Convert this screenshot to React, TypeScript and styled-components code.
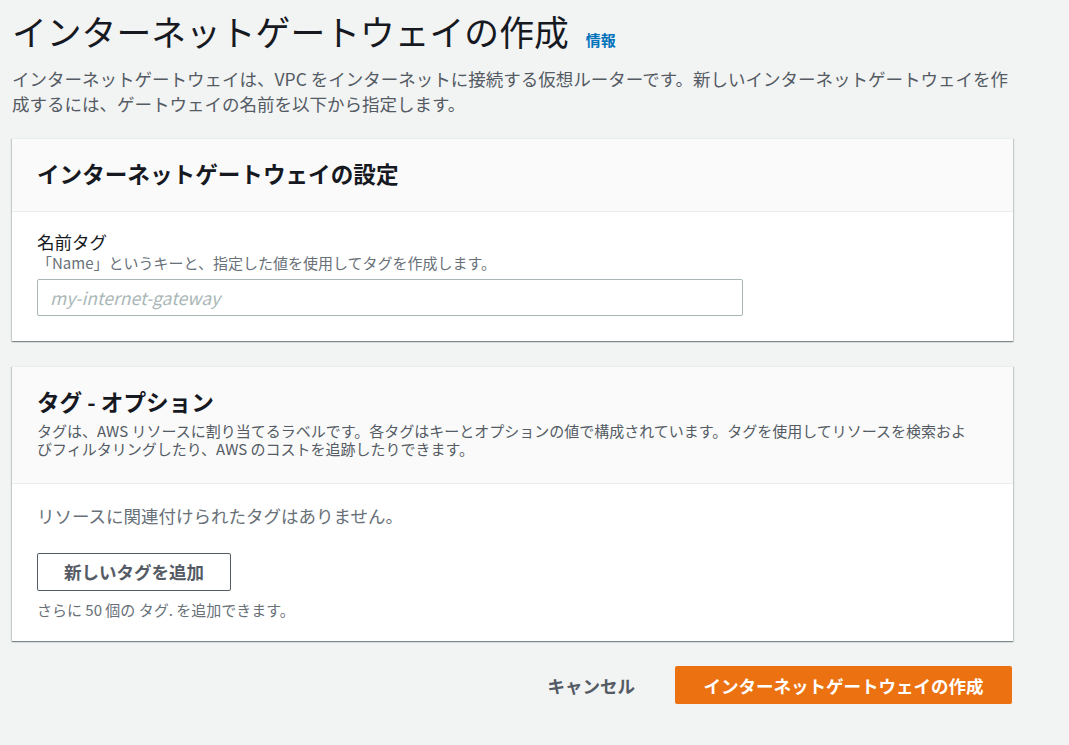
import React from "react";
import styled, { createGlobalStyle } from "styled-components";

const GlobalStyle = createGlobalStyle`
  html, body {
    margin: 0;
    padding: 0;
    background: #f2f3f3;
  }
  body {
    font-family: "Noto Sans CJK JP", "Noto Sans", sans-serif;
    color: #16191f;
    -webkit-font-smoothing: antialiased;
  }
  * { box-sizing: border-box; }
`;

const Page = styled.div`
  width: 1001px;
  margin-left: 12px;
  padding-top: 10px;
  padding-bottom: 40px;
`;

const TitleRow = styled.div`
  display: flex;
  align-items: baseline;
  gap: 17px;
`;

const Title = styled.h1`
  margin: 0;
  font-size: 34.8px;
  line-height: 42px;
  font-weight: 400;
  color: #16191f;
`;

const InfoLink = styled.a`
  font-size: 15px;
  font-weight: 700;
  color: #0073bb;
  text-decoration: none;
  line-height: 20px;
`;

const Lead = styled.p`
  margin: 14px 0 0;
  font-size: 17.5px;
  line-height: 25px;
  color: #545b64;
  max-width: 1001px;
`;

const Card = styled.section`
  margin-top: ${(p: { $top: number }) => p.$top}px;
  background: #ffffff;
  border-top: 1px solid #eaeded;
  box-shadow: 0 1px 1px 0 rgba(0, 28, 36, 0.3),
    1px 1px 1px 0 rgba(0, 28, 36, 0.15), -1px 1px 1px 0 rgba(0, 28, 36, 0.15);
`;

const CardHeader = styled.header<{ $bottom: number }>`
  background: #fafafa;
  border-bottom: 1px solid #eaeded;
  padding: 20px 25px ${(p) => p.$bottom}px;
`;

const CardTitle = styled.h2`
  margin: 0;
  font-size: 22.6px;
  line-height: 30px;
  font-weight: 700;
  color: #16191f;
`;

const CardDesc = styled.p`
  margin: 5px 0 0;
  max-width: 936px;
  font-size: 15px;
  line-height: 18px;
  color: #545b64;
`;

const CardBody = styled.div<{ $top: number; $bottom: number }>`
  padding: ${(p) => p.$top}px 25px ${(p) => p.$bottom}px;
  display: flex;
  flex-direction: column;
  align-items: flex-start;
`;

const Label = styled.label`
  font-size: 17.5px;
  line-height: 25px;
  color: #16191f;
`;

const Hint = styled.div<{ $top?: number }>`
  margin-top: ${(p) => p.$top ?? 0}px;
  font-size: 15px;
  line-height: 18px;
  color: #687078;
`;

const TextInput = styled.input`
  margin-top: 7px;
  width: 706px;
  height: 37px;
  border: 1px solid #aab7b8;
  border-radius: 2px;
  padding: 0 12px;
  font-family: "Noto Sans CJK JP", "Noto Sans", sans-serif;
  font-size: 17.5px;
  color: #16191f;
  background: #fff;
  outline: none;
  &::placeholder {
    color: #aab7b8;
    font-style: italic;
  }
`;

const EmptyText = styled.div`
  font-size: 17.5px;
  line-height: 25px;
  color: #687078;
`;

const OutlineButton = styled.button`
  margin-top: 25px;
  height: 38px;
  padding: 0 26px;
  border: 1px solid #545b64;
  border-radius: 2px;
  background: #fff;
  color: #545b64;
  font-family: "Noto Sans CJK JP", "Noto Sans", sans-serif;
  font-size: 17.5px;
  font-weight: 700;
  line-height: 22px;
  cursor: pointer;
`;

const Footer = styled.div`
  margin-top: 25px;
  display: flex;
  justify-content: flex-end;
  align-items: center;
  gap: 14px;
  padding-right: 1px;
`;

const LinkButton = styled.button`
  height: 38px;
  padding: 0 26px;
  border: none;
  background: transparent;
  color: #545b64;
  font-family: "Noto Sans CJK JP", "Noto Sans", sans-serif;
  font-size: 17.5px;
  font-weight: 700;
  cursor: pointer;
`;

const PrimaryButton = styled.button`
  height: 38px;
  width: 337px;
  border: none;
  border-radius: 2px;
  background: #ec7211;
  color: #ffffff;
  font-family: "Noto Sans CJK JP", "Noto Sans", sans-serif;
  font-size: 17.5px;
  font-weight: 700;
  cursor: pointer;
`;

export default function App() {
  return (
    <>
      <GlobalStyle />
      <Page>
        <TitleRow>
          <Title>インターネットゲートウェイの作成</Title>
          <InfoLink href="#">情報</InfoLink>
        </TitleRow>
        <Lead>
          インターネットゲートウェイは、VPC をインターネットに接続する仮想ルーターです。新しいインターネットゲートウェイを作成するには、ゲートウェイの名前を以下から指定します。
        </Lead>

        <Card $top={22}>
          <CardHeader $bottom={22}>
            <CardTitle>インターネットゲートウェイの設定</CardTitle>
          </CardHeader>
          <CardBody $top={17} $bottom={25}>
            <Label htmlFor="name-tag">名前タグ</Label>
            <Hint>「Name」というキーと、指定した値を使用してタグを作成します。</Hint>
            <TextInput id="name-tag" placeholder="my-internet-gateway" />
          </CardBody>
        </Card>

        <Card $top={25}>
          <CardHeader $bottom={25}>
            <CardTitle>タグ - オプション</CardTitle>
            <CardDesc>
              タグは、AWS リソースに割り当てるラベルです。各タグはキーとオプションの値で構成されています。タグを使用してリソースを検索およびフィルタリングしたり、AWS のコストを追跡したりできます。
            </CardDesc>
          </CardHeader>
          <CardBody $top={19} $bottom={22}>
            <EmptyText>リソースに関連付けられたタグはありません。</EmptyText>
            <OutlineButton>新しいタグを追加</OutlineButton>
            <Hint $top={10}>さらに 50 個の タグ. を追加できます。</Hint>
          </CardBody>
        </Card>

        <Footer>
          <LinkButton>キャンセル</LinkButton>
          <PrimaryButton>インターネットゲートウェイの作成</PrimaryButton>
        </Footer>
      </Page>
    </>
  );
}
